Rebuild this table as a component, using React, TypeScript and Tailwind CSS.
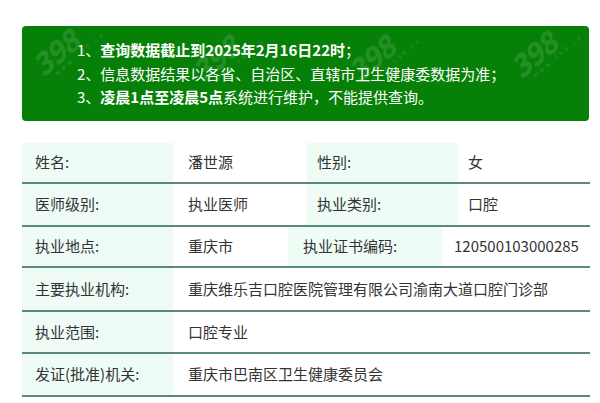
import React from 'react';

const font = { fontFamily: '"Noto Sans CJK SC", "Noto Sans", sans-serif' };

// Faint site watermark stamped over the notice box
const marks = [
  { left: 6, top: 2 },
  { left: 166, top: 8 },
  { left: 322, top: 8 },
  { left: 484, top: 4 },
];

function Row({
  cols,
  cells,
  h,
}: {
  cols: string;
  cells: { text: string; label?: boolean; pl: string }[];
  h: string;
}) {
  return (
    <div className={`grid ${cols} ${h} border-b-2 border-[#5b8b78]`}>
      {cells.map((c, i) => (
        <div
          key={i}
          className={`flex items-center ${c.pl} ${c.label ? 'bg-[#effcf6]' : 'bg-white'} whitespace-nowrap`}
        >
          {c.text}
        </div>
      ))}
    </div>
  );
}

export default function App() {
  const colsA = 'grid-cols-[151px_134px_151px_131px]';
  const colsB = 'grid-cols-[151px_115px_154px_147px]';
  const colsC = 'grid-cols-[151px_1fr]';

  return (
    <div className="w-[600px] h-[403px] bg-white overflow-hidden" style={font}>
      <div className="pt-[26px] px-[22px] pr-[11px]">
        {/* notice box */}
        <div className="relative h-[95px] rounded-[4px] bg-[#068006] pl-[55px] pt-[12px] text-[15px] leading-[23.5px] text-white overflow-hidden">
          {marks.map((m, i) => (
            <div
              key={i}
              aria-hidden="true"
              className="absolute pointer-events-none -rotate-[40deg] select-none"
              style={{ left: m.left, top: m.top }}
            >
              <div className="text-[30px] font-black italic leading-none text-white/12 tracking-tighter">398</div>
              <div className="text-[6px] leading-none text-white/20 tracking-[3px] pl-[12px]">www.398.cn</div>
            </div>
          ))}
          <div className="relative">
            1、<span className="font-bold">查询数据截止到2025年2月16日22时</span>；
          </div>
          <div className="relative">2、信息数据结果以各省、自治区、直辖市卫生健康委数据为准；</div>
          <div className="relative">
            3、<span className="font-bold">凌晨1点至凌晨5点</span>系统进行维护，不能提供查询。
          </div>
        </div>

        {/* info table */}
        <div className="mt-[22px] w-[568px] text-[15px] text-[#333]">
          <Row
            cols={colsA}
            h="h-[41px]"
            cells={[
              { text: '姓名:', label: true, pl: 'pl-[13px]' },
              { text: '潘世源', pl: 'pl-[15px]' },
              { text: '性别:', label: true, pl: 'pl-[10px]' },
              { text: '女', pl: 'pl-[10px]' },
            ]}
          />
          <Row
            cols={colsA}
            h="h-[43px]"
            cells={[
              { text: '医师级别:', label: true, pl: 'pl-[13px]' },
              { text: '执业医师', pl: 'pl-[15px]' },
              { text: '执业类别:', label: true, pl: 'pl-[10px]' },
              { text: '口腔', pl: 'pl-[10px]' },
            ]}
          />
          <Row
            cols={colsB}
            h="h-[41px]"
            cells={[
              { text: '执业地点:', label: true, pl: 'pl-[13px]' },
              { text: '重庆市', pl: 'pl-[15px]' },
              { text: '执业证书编码:', label: true, pl: 'pl-[15px]' },
              { text: '120500103000285', pl: 'pl-[12px]' },
            ]}
          />
          <Row
            cols={colsC}
            h="h-[44px]"
            cells={[
              { text: '主要执业机构:', label: true, pl: 'pl-[13px]' },
              { text: '重庆维乐吉口腔医院管理有限公司渝南大道口腔门诊部', pl: 'pl-[15px]' },
            ]}
          />
          <Row
            cols={colsC}
            h="h-[42px]"
            cells={[
              { text: '执业范围:', label: true, pl: 'pl-[13px]' },
              { text: '口腔专业', pl: 'pl-[15px]' },
            ]}
          />
          <Row
            cols={colsC}
            h="h-[43px]"
            cells={[
              { text: '发证(批准)机关:', label: true, pl: 'pl-[13px]' },
              { text: '重庆市巴南区卫生健康委员会', pl: 'pl-[15px]' },
            ]}
          />
        </div>
      </div>
    </div>
  );
}
